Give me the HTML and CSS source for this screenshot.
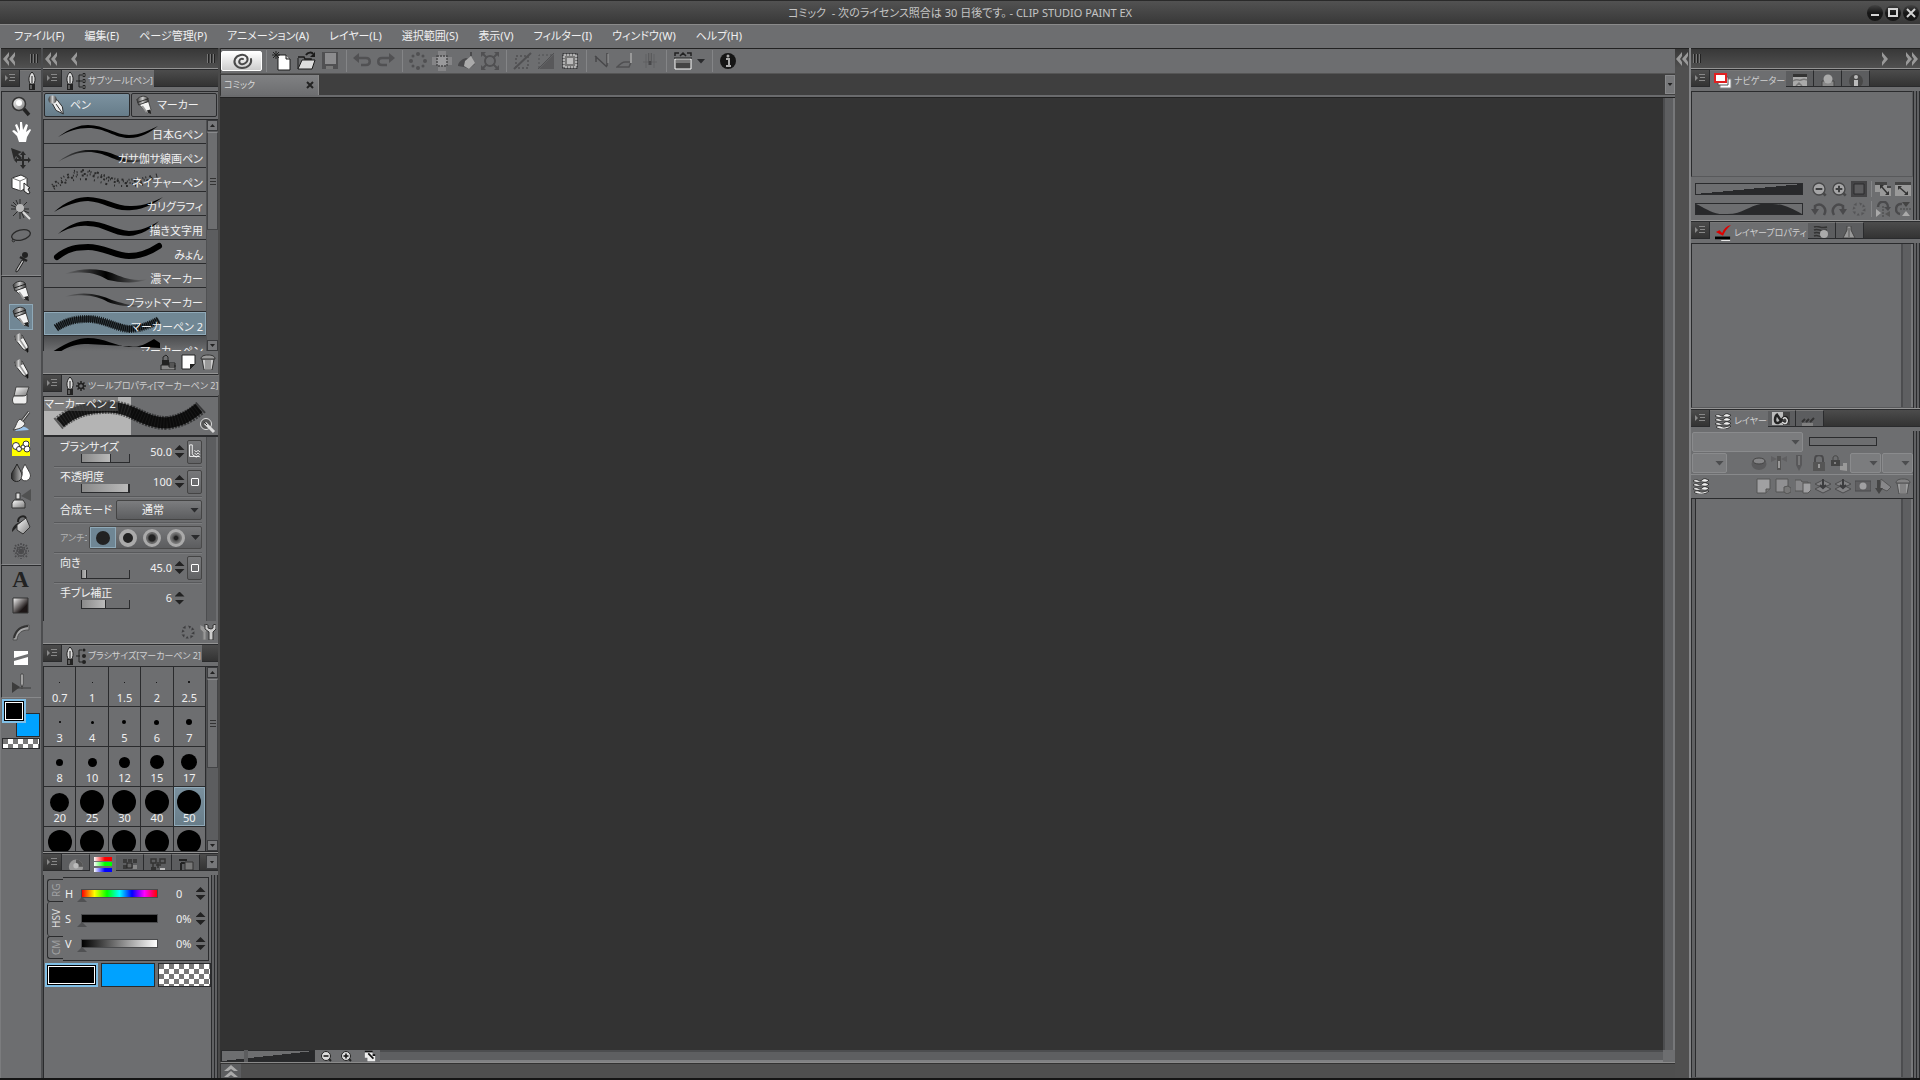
FILE: index.html
```html
<!DOCTYPE html>
<html lang="ja">
<head>
    <meta charset="UTF-8">
    <meta name="viewport" content="width=device-width, initial-scale=1.0">
    <title>CLIP STUDIO PAINT EX</title>
    <link rel="stylesheet" href="styles.css">
</head>
<body>

<!-- icon library -->
<svg class="defs" width="0" height="0" aria-hidden="true">
    <defs>
        <linearGradient id="metal" x1="0" y1="0" x2="1" y2="1"><stop offset="0" stop-color="#fff"/><stop offset="1" stop-color="#777"/></linearGradient>
        <linearGradient id="cap" x1="0" y1="0" x2="1" y2="0"><stop offset="0" stop-color="#333"/><stop offset=".5" stop-color="#ccc"/><stop offset="1" stop-color="#333"/></linearGradient>
        <linearGradient id="dark" x1="0" y1="0" x2="1" y2="1"><stop offset="0" stop-color="#fff"/><stop offset=".7" stop-color="#1c1616"/></linearGradient>
        <linearGradient id="drop" x1="0" y1="0" x2="1" y2="0"><stop offset="0" stop-color="#222"/><stop offset="1" stop-color="#bbb"/></linearGradient>
        <linearGradient id="fade" x1="0" y1="0" x2="1" y2="0"><stop offset="0" stop-color="#000" stop-opacity="0"/><stop offset=".5" stop-color="#000"/><stop offset="1" stop-color="#000" stop-opacity="0"/></linearGradient>
        <linearGradient id="fadein" x1="0" y1="0" x2="1" y2="0"><stop offset="0" stop-color="#000" stop-opacity=".3"/><stop offset=".4" stop-color="#000"/><stop offset=".55" stop-color="#000"/><stop offset="1" stop-color="#000" stop-opacity="0"/></linearGradient>
        <linearGradient id="red" x1="0" y1="0" x2="1" y2="0"><stop offset="0" stop-color="#fff"/><stop offset=".6" stop-color="#f00"/></linearGradient>
        <linearGradient id="green" x1="0" y1="0" x2="1" y2="0"><stop offset="0" stop-color="#fff"/><stop offset=".6" stop-color="#0f0"/></linearGradient>
        <linearGradient id="blue" x1="0" y1="0" x2="1" y2="0"><stop offset="0" stop-color="#fff"/><stop offset=".6" stop-color="#00f"/></linearGradient>
    </defs>

    <symbol id="i-dbl-left" viewBox="0 0 12 14"><path d="M6 0 0 7l6 7V10L4 7l2-3zM12 0 6 7l6 7V10l-2-3 2-3z" fill="#999"/></symbol>
    <symbol id="i-left" viewBox="0 0 6 14"><path d="M6 0 0 7l6 7V10L4 7l2-3z" fill="#999"/></symbol>
    <symbol id="i-right" viewBox="0 0 6 14"><path d="M0 0l6 7-6 7V10l2-3-2-3z" fill="#999"/></symbol>
    <symbol id="i-dbl-right" viewBox="0 0 12 14"><path d="M0 0l6 7-6 7V10l2-3-2-3zM6 0l6 7-6 7V10l2-3-2-3z" fill="#999"/></symbol>
    <symbol id="i-menu" viewBox="0 0 10 10"><path d="M0 2l3 3-3 3z" fill="#888"/><path d="M4 1.500h6M5 4.500h5M4 7.500h6" stroke="#888"/></symbol>
    <symbol id="i-nib" viewBox="0 0 8 18"><path d="M4 0c3 3 4 7 2 12H2C0 7 1 3 4 0z" fill="#ddd" stroke="#222"/><path d="M4 4v7" stroke="#222"/><path d="M1 12h6v6H1z" fill="#222"/><path d="M3 13v4" stroke="#999"/></symbol>
    <symbol id="i-tree" viewBox="0 0 10 16"><path d="M0 8h4M3 2h3M3 2v12h3M3 8h3" fill="none" stroke="#222"/><path d="M7 .5h2v3H7zM7 6.500h2v3H7zM7 12.500h2v3H7z" fill="#888" stroke="#222"/></symbol>
    <symbol id="i-dots" viewBox="0 0 10 16"><path d="M0 8h4M3 2h3M3 2v12h3" fill="none" stroke="#222"/><circle cx="8" cy="2" r="1.500" fill="#222"/><circle cx="8" cy="8" r="2" fill="#222"/><circle cx="8" cy="14" r="2" fill="#222"/></symbol>
    <symbol id="i-gear" viewBox="0 0 10 10"><circle cx="5" cy="5" r="2.500" fill="none" stroke="#222" stroke-width="1.500"/><path d="M5 0v3M5 7v3M0 5h3M7 5h3M1.500 1.500l2 2M6.500 6.500l2 2M8.500 1.500l-2 2M3.500 6.500l-2 2" stroke="#222" stroke-width="1.500"/></symbol>
    <symbol id="i-pen" viewBox="0 0 20 22"><path d="M4 8l6-3 6 8 1 8-8-4z" fill="#eee" stroke="#222"/><path d="M9 10l7 10" stroke="#222"/><circle cx="5" cy="5" r="4.500" fill="url(#cap)"/></symbol>
    <symbol id="i-marker" viewBox="0 0 20 22"><path d="M4 10l11-3 3 10-4 3z" fill="#f4f4f4" stroke="#444"/><path d="M8 12l5 7" stroke="#999" stroke-width="2"/><path d="M13 17l4-1 1 5-3-1z" fill="#222"/><path d="M2 5C5 1 11 0 14 3l1 4-11 4z" fill="url(#cap)" stroke="#333"/><path d="M3 8l12-4" stroke="#222"/></symbol>
    <symbol id="i-pencil" viewBox="0 0 20 22"><path d="M4 7l7-4 6 11v6l-5-3z" fill="#f2f2f2" stroke="#333"/><path d="M7 5l8 12" stroke="#999" stroke-width="1.500"/><path d="M3 4l6-3 3 5-6 4z" fill="url(#cap)"/><path d="M14 17l3-1v5z" fill="#111"/></symbol>
    <symbol id="i-zoom" viewBox="0 0 20 22"><path d="M12 13l6 7" stroke="#222" stroke-width="3.500"/><circle cx="8" cy="9" r="6.500" fill="url(#metal)" stroke="#333" stroke-width="1.500"/><circle cx="8" cy="8" r="3" fill="#fff"/></symbol>
    <symbol id="i-hand" viewBox="0 0 20 22"><path d="M6 15L1 10l2-1 4 3-3-8 2-1 3 7V1h2l1 8 3-6 2 1-2 7 4-3 1 1-4 7-1 5H8z" fill="#fff"/></symbol>
    <symbol id="i-move" viewBox="0 0 20 22"><path d="M0 1l11 4-4 2 4 4-2 2-4-4-2 4z" fill="#2a2a2a"/><path d="M12 7v12M6 13h12" stroke="#2a2a2a" stroke-width="2"/><path d="M9 8l3-4 3 4zM9 18l3 4 3-4zM6 10l-3 3 3 3zM17 10l3 3-3 3z" fill="#2a2a2a"/></symbol>
    <symbol id="i-cube" viewBox="0 0 20 22"><path d="M1 5l9-3 6 3v9l-6 4-9-3z" fill="#fff" stroke="#333"/><path d="M1 5l8 3 7-3M9 8v10" fill="none" stroke="#777"/><path d="M13 10l6 5-2 1 2 4-2 1-4-3z" fill="#eee" stroke="#222"/></symbol>
    <symbol id="i-wand" viewBox="0 0 20 22"><path d="M9 0v20M0 10h18M2 3l14 14M16 3L2 17M5 1l8 18M0 6l18 8" stroke="#2b2b2b"/><circle cx="9" cy="9" r="4" fill="#bbb"/><path d="M12 13l7 7" stroke="#ddd" stroke-width="2"/></symbol>
    <symbol id="i-lasso" viewBox="0 0 20 22"><ellipse cx="10" cy="10" rx="9.500" ry="5" fill="none" stroke="#2a2a2a" stroke-width="1.300" transform="rotate(-14 10 10)"/><path d="M2 14c-2 2 0 4 2 2" fill="none" stroke="#2a2a2a"/></symbol>
    <symbol id="i-dropper" viewBox="0 0 20 22"><path d="M11 9l2 1-6 10-2 1 0-2z" fill="#bbb" stroke="#222"/><path d="M9 6l7 4" stroke="#222" stroke-width="2.500"/><circle cx="14" cy="4" r="3" fill="#222"/></symbol>
    <symbol id="i-eraser" viewBox="0 0 20 22"><path d="M5 3h13l-3 9H3z" fill="url(#metal)" stroke="#444"/><path d="M3 12h8c2 0 4 0 5-2v7c0 3-2 3-4 3H3c-2-2-2-6 0-8z" fill="#eee" stroke="#444"/></symbol>
    <symbol id="i-brush" viewBox="0 0 20 22"><path d="M4 21c6-6 11-5 14-1z" fill="#9ac4ec"/><path d="M18 2l-7 9" stroke="#444" stroke-width="3"/><path d="M18 2l-7 9" stroke="#ddd"/><path d="M9 9l5 4c-1 5-7 6-12 7 4-4 3-9 7-11z" fill="#eee" stroke="#444"/></symbol>
    <symbol id="i-butterfly" viewBox="0 0 20 22"><path d="M1 2h18v18H1z" fill="#ff0"/><g fill="#fff" stroke="#333"><circle cx="5" cy="10" r="3.500"/><circle cx="15" cy="8" r="3"/><circle cx="16" cy="13" r="3"/><circle cx="8" cy="13" r="2.500"/><circle cx="12" cy="11" r="2"/></g></symbol>
    <symbol id="i-blend" viewBox="0 0 20 22"><path d="M6 2c3 6 5 9 5 12a5 5 0 0 1-11 0c0-3 3-6 6-12z" fill="url(#drop)" stroke="#222"/><path d="M14 2c3 6 5.500 9 5.500 12a5 5 0 0 1-9.500 2c2-3 1-7 1-8z" fill="#fff" stroke="#444"/></symbol>
    <symbol id="i-spray" viewBox="0 0 20 22"><path d="M10 8l10-7v12z" fill="#444" opacity=".7"/><path d="M5 5h4v6H5z" fill="#ddd" stroke="#333"/><path d="M3 12h9l2 3v5H1v-5z" fill="url(#metal)" stroke="#333"/></symbol>
    <symbol id="i-bucket" viewBox="0 0 20 22"><path d="M1 18c0-5 3-8 8-10l3 1-6 4z" fill="#222"/><path d="M6 11l9-7 4 9-7 7-6-4z" fill="url(#metal)" stroke="#333"/><path d="M7 8c0-6 6-7 8-4" fill="none" stroke="#222" stroke-width="2"/></symbol>
    <symbol id="i-burst" viewBox="0 0 20 22"><path d="M10 3v16M2 11h16M4 5l12 12M16 5L4 17M7 4l6 14M13 4L7 18M3 8l14 6M17 8L3 14" stroke="#4a4a4c" stroke-width="1.500" stroke-dasharray="2 1"/></symbol>
    <symbol id="i-gradient" viewBox="0 0 20 22"><path d="M2 3h15v15H2z" fill="url(#dark)" stroke="#333"/></symbol>
    <symbol id="i-figure" viewBox="0 0 20 22"><path d="M2 19C3 10 8 5 18 4v5C10 9 7 12 6 19z" fill="url(#metal)" stroke="#444" opacity=".7"/><path d="M3 17C5 9 9 6 17 5" stroke="#333" fill="none" stroke-width="2"/></symbol>
    <symbol id="i-frame" viewBox="0 0 20 22"><path d="M3 4h14v3L3 11zM3 14l14-4v8H3z" fill="#fff"/></symbol>
    <symbol id="i-ruler" viewBox="0 0 20 22"><path d="M1 9l8 5-8 6z" fill="#3c3c3c"/><path d="M6 15h14" stroke="#3c3c3c"/><path d="M10 1v10l1 5 1-5V1z" fill="#fff" stroke="#444"/></symbol>

    <symbol id="i-swirl" viewBox="0 0 24 18"><path d="M13 7c-4-1-5 4-2 5 4 1 8-3 6-7-3-4-10-2-12 2-2 5 2 9 7 9 6 0 10-4 9-9" fill="none" stroke="#4a4a4a" stroke-width="2" stroke-linecap="round"/></symbol>
    <symbol id="i-new" viewBox="0 0 20 20"><path d="M6 4h8l4 4v11H6z" fill="#fff" stroke="#1a1a1a"/><path d="M14 4v4h4" fill="#ccc" stroke="#1a1a1a"/><path d="M4 0v8M0 4h8M1 1l6 6M7 1L1 7" stroke="#222"/></symbol>
    <symbol id="i-open" viewBox="0 0 20 20"><path d="M2 6h6l1 2h6v3" fill="none" stroke="#1a1a1a" stroke-width="1.500"/><path d="M2 18V7" stroke="#1a1a1a"/><path d="M6 9h13l-3 9H2z" fill="#ddd" stroke="#1a1a1a"/><path d="M10 4c2-3 6-3 7-1" fill="none" stroke="#1a1a1a" stroke-width="2"/><path d="M19 1v5h-5z" fill="#1a1a1a"/></symbol>
    <symbol id="i-save" viewBox="0 0 20 20"><path d="M2 1h16v17H2z" fill="#505052"/><path d="M5 2h11v11H5z" fill="#8c8c8e"/><path d="M6 15h7v3H6z" fill="#777"/></symbol>
    <symbol id="i-undo" viewBox="0 0 20 20"><path d="M6 7h8c5 0 5 7 0 7H9" fill="none" stroke="#515153" stroke-width="2.500" /><path d="M7 2v10L1 7z" fill="#515153"/></symbol>
    <symbol id="i-redo" viewBox="0 0 20 20"><path d="M14 7H6c-5 0-5 7 0 7h5" fill="none" stroke="#515153" stroke-width="2.500"/><path d="M13 2v10l6-5z" fill="#515153"/></symbol>
    <symbol id="i-spots" viewBox="0 0 20 20"><g fill="#505052"><circle cx="10" cy="3" r="2"/><circle cx="15" cy="5" r="1.500"/><circle cx="17" cy="10" r="2"/><circle cx="15" cy="15" r="1.500"/><circle cx="10" cy="17" r="2"/><circle cx="5" cy="15" r="1.500"/><circle cx="3" cy="10" r="2"/><circle cx="5" cy="5" r="1.500"/></g></symbol>
    <symbol id="i-spin" viewBox="0 0 20 20"><path d="M10 2l4 1-2 3zM15 4l3 3-4 1zM18 9v4l-4-1zM17 15l-4 3v-4zM11 18l-4 0 2-3zM5 17l-3-4h4zM2 11l1-4 3 2zM3 5l4-3v4z" fill="#3e3e40"/></symbol>
    <symbol id="i-select-clear" viewBox="0 0 20 20"><path d="M6 0h8v20H6zM0 6h20v8H0z" fill="#858587"/><path d="M5 5h10v10H5z" fill="#9a9a9c" stroke="#48484a" stroke-width="1.500" stroke-dasharray="2 1"/></symbol>
    <symbol id="i-fill" viewBox="0 0 20 20"><path d="M2 15c0-4 4-7 8-8l6 2 3 4-6 5-5-2z" fill="#4a4a4c"/><path d="M9 10l6-5 4 7-6 6-5-3z" fill="#aaa"/><path d="M15 1v4" stroke="#4a4a4c" stroke-width="2"/></symbol>
    <symbol id="i-scale" viewBox="0 0 20 20"><circle cx="10" cy="10" r="5" fill="none" stroke="#505052" stroke-width="2"/><path d="M2 2l5 5M18 2l-5 5M2 18l5-5M18 18l-5-5" stroke="#505052" stroke-width="2"/><path d="M1 1h5L1 6zM19 1h-5l5 5zM1 19h5l-5-5zM19 19h-5l5-5z" fill="#505052"/></symbol>
    <symbol id="i-desel" viewBox="0 0 20 20"><path d="M4 5h12v12H4z" fill="none" stroke="#505052" stroke-width="1.500" stroke-dasharray="2 2"/><path d="M2 18L19 2" stroke="#505052" stroke-width="2"/></symbol>
    <symbol id="i-invert" viewBox="0 0 20 20"><path d="M18 3v15H3z" fill="#58585a"/><path d="M3 17V4h13" fill="none" stroke="#505052" stroke-dasharray="2 2"/><path d="M2 18L18 2" stroke="#505052"/></symbol>
    <symbol id="i-marquee" viewBox="0 0 20 20"><path d="M4 4h12v12H4z" fill="#777" stroke="#b0b0b0" stroke-width="2" stroke-dasharray="2 1"/><path d="M2.500 2.500h15v15h-15z" fill="none" stroke="#3c3c3e" stroke-dasharray="2 1"/><path d="M7 7h6v6H7z" fill="#bbb"/></symbol>
    <symbol id="i-snap1" viewBox="0 0 20 20"><path d="M3 5l12 11M4 5v6M15 15V2" fill="none" stroke="#48484a" stroke-width="1.500"/><path d="M16 3v9" stroke="#999"/></symbol>
    <symbol id="i-snap2" viewBox="0 0 20 20"><path d="M1 16h12l2-5H9c-3 0-5 2-8 5z" fill="none" stroke="#505052" stroke-width="1.500"/><path d="M15 2v10" stroke="#999" stroke-width="2"/></symbol>
    <symbol id="i-snap3" viewBox="0 0 20 20"><path d="M6 3v14M14 3v14M3 11h14" stroke="#606062"/><path d="M10 2v12" stroke="#48484a" stroke-width="3"/><path d="M10 2v8" stroke="#888"/></symbol>
    <symbol id="i-bar" viewBox="0 0 20 20"><path d="M2 5V2h4M14 2h4v3M7 5l3-3 3 3" fill="none" stroke="#222" stroke-width="1.500"/><path d="M2 8h16v10H2z" fill="#444" stroke="#fff"/><path d="M1 7h18" stroke="#222"/><path d="M3 9h14v3H3z" fill="#777"/></symbol>
    <symbol id="i-info" viewBox="0 0 20 20"><circle cx="10" cy="10" r="8" fill="#151515"/><path d="M8 8h3v7M8 15h5" stroke="#aaa" stroke-width="2" fill="none"/><circle cx="10" cy="5" r="1.500" fill="#aaa"/></symbol>

    <symbol id="i-pages" viewBox="0 0 18 16"><path d="M6 6h11v9H6z" fill="#fff" stroke="#888"/><path d="M4 4h10v8H4z" fill="#fff" stroke="#555"/><path d="M1 1h11v8H1z" fill="#fff" stroke="#e02020" stroke-width="2"/></symbol>
    <symbol id="i-subview" viewBox="0 0 16 12"><path d="M1 0h14v3H1z" fill="#333"/><path d="M1 3h14v9H1z" fill="#aaa"/><path d="M1 7c4-3 6 0 8-1s4-1 6 0M4 12l3-3 3 3" stroke="#777" fill="none" stroke-width="1.500"/></symbol>
    <symbol id="i-head" viewBox="0 0 16 12"><path d="M2 12V7h12v5" fill="#888" stroke="#444"/><circle cx="8" cy="5" r="4.500" fill="#aaa"/></symbol>
    <symbol id="i-info-dim" viewBox="0 0 16 12"><circle cx="8" cy="7" r="7" fill="#484848"/><circle cx="8" cy="3" r="2" fill="#bbb"/><path d="M6 6h4v6H6z" fill="#bbb"/></symbol>
    <symbol id="i-check" viewBox="0 0 18 18"><path d="M1 8l4-2 3 3c2-5 5-8 10-9-5 4-7 8-9 12z" fill="#d00"/><path d="M0 13h17v3H0z" fill="#000"/><path d="M7 17.500h10" stroke="#fff"/></symbol>
    <symbol id="i-layers" viewBox="0 0 18 16"><path d="M1 3c4-4 6 2 9-1s5 0 7 0c-3 4-6 1-9 2S3 4 1 3zM1 7c4-4 6 2 9-1s5 0 7 0c-3 4-6 1-9 2S3 8 1 7zM1 11c4-4 6 2 9-1s5 0 7 0c-3 4-6 1-9 2s-5 0-7-1zM2 14c4-3 6 1 9 0s4-1 6-1c-3 4-12 4-15 1z" fill="#eee" stroke="#222" stroke-width=".8"/></symbol>
    <symbol id="i-search-layer" viewBox="0 0 16 12"><path d="M1 1c5-2 6 2 13 0M1 4c5-2 6 2 13 0M1 7c5-2 6 2 13 0M1 10c4-2 6 2 8 0" fill="none" stroke="#333" stroke-width="1.500"/><circle cx="11" cy="8" r="4" fill="#aaa"/></symbol>
    <symbol id="i-flask" viewBox="0 0 16 12"><path d="M6 0h4v4l4 8H2l4-8z" fill="#999" stroke="#444"/><path d="M8 2v9" stroke="#555"/></symbol>
    <symbol id="i-knot" viewBox="0 0 18 13"><path d="M0 0h11v13H0z" fill="#bbb"/><path d="M11 0h7v13h-7z" fill="#444"/><path d="M6 2C2 4 2 12 6 11s4-6 7-6 4 6 0 6-5-5-8-8" fill="none" stroke="#222" stroke-width="2.500"/><path d="M11 7c2-3 5 0 4 3s-4 1-5 0" fill="none" stroke="#ddd" stroke-width="1.500"/></symbol>
    <symbol id="i-clap" viewBox="0 0 16 12"><path d="M1 9h11v3H1z" fill="#808080"/><path d="M1 8l3-3M5 8l3-3M9 8l4-4" stroke="#333" stroke-width="2"/></symbol>
    <symbol id="i-ball" viewBox="0 0 18 12"><circle cx="9" cy="9" r="8" fill="#999"/><path d="M9 1a8 8 0 0 1 8 8H9z" fill="#555"/><circle cx="9" cy="8" r="3" fill="#bbb"/></symbol>
    <symbol id="i-rgb" viewBox="0 0 18 16"><path d="M0 0h18v4H0z" fill="url(#red)"/><path d="M0 5h18v4H0z" fill="url(#green)"/><path d="M0 11h18v4H0z" fill="url(#blue)"/></symbol>
    <symbol id="i-palette" viewBox="0 0 16 12"><path d="M1 1h4v4H1zM6 1h4v3H6zM11 1h4v4h-4zM1 7h4v4H1z" fill="#3a3a3a"/><path d="M11 7h4v4h-4z" fill="#888"/><path d="M5 5h5v5H5z" fill="#666" stroke="#222"/></symbol>
    <symbol id="i-mix" viewBox="0 0 16 12"><path d="M1 1h5v4H1zM10 1h5v4h-5zM3 5v4M6 7h5M8 4v6" fill="none" stroke="#333" stroke-width="1.500"/><path d="M1 9h5v3H1z" fill="#333"/><path d="M10 10h5v2h-5z" fill="#bbb"/></symbol>
    <symbol id="i-history" viewBox="0 0 16 12"><path d="M1 2h8M3 5h5M3 5v7" stroke="#222" stroke-width="2"/><path d="M7 4h8v8H7z" fill="#777" stroke="#333"/></symbol>

    <symbol id="i-minus" viewBox="0 0 12 12"><path d="M8 8l3 3" stroke="#222" stroke-width="2"/><circle cx="6" cy="6" r="4.500" fill="#ddd" stroke="#222"/><path d="M3.500 6h5" stroke="#111" stroke-width="1.500"/></symbol>
    <symbol id="i-plus" viewBox="0 0 12 12"><path d="M8 8l3 3" stroke="#222" stroke-width="2"/><circle cx="6" cy="6" r="4.500" fill="#ddd" stroke="#222"/><path d="M3.500 6h5M6 3.500v5" stroke="#111" stroke-width="1.500"/></symbol>
    <symbol id="i-fit" viewBox="0 0 14 12"><path d="M1 0h9v2H1zM4 4h9v2H4z" fill="#111"/><path d="M1 2h9v6H1zM4 6h9v6H4z" fill="#eee"/><path d="M5 3l6 6" stroke="#111" stroke-width="2"/></symbol>
    <symbol id="i-box" viewBox="0 0 16 16"><path d="M0 0h16v16H0z" fill="#434345"/><path d="M3 3h10v10H3z" fill="#5c5c5e" stroke="#2c2c2e"/></symbol>
    <symbol id="i-window" viewBox="0 0 16 14"><path d="M0 0h16v3H0z" fill="#444"/><path d="M0 3h16v11H0z" fill="#999"/><path d="M4 5l8 7" stroke="#333" stroke-width="1.500"/><path d="M3 4h4l-4 4zM13 13H9l4-4z" fill="#333"/></symbol>
    <symbol id="i-windows" viewBox="0 0 16 14"><path d="M0 0h12v3H0zM5 4h11v2H5z" fill="#444"/><path d="M0 3h12v7H0zM5 6h11v8H5z" fill="#999"/><path d="M6 4l7 8" stroke="#333" stroke-width="1.500"/><path d="M5 3h4l-4 4zM14 13h-4l4-4z" fill="#333"/></symbol>
    <symbol id="i-rot-l" viewBox="0 0 16 14"><path d="M13 13c4-7-3-13-9-9v6" fill="none" stroke="#4a4a4c" stroke-width="2.500"/><path d="M0 7h8l-4 6z" fill="#4a4a4c"/></symbol>
    <symbol id="i-rot-r" viewBox="0 0 16 14"><path d="M3 13C-1 6 6 0 12 4v6" fill="none" stroke="#4a4a4c" stroke-width="2.500"/><path d="M8 7h8l-4 6z" fill="#4a4a4c"/></symbol>
    <symbol id="i-flip" viewBox="0 0 16 16"><path d="M3 6c0-7 10-7 10 0" fill="none" stroke="#4a4a4c" stroke-width="2.500"/><path d="M9 6h7l-3 4z" fill="#4a4a4c"/><path d="M1 8l5 4-5 4z" fill="#aaa"/><path d="M15 10v6l-5-3z" fill="#555"/><path d="M8 5v11" stroke="#444" stroke-dasharray="2 1"/></symbol>
    <symbol id="i-vflip" viewBox="0 0 16 16"><path d="M7 3C0 2-1 12 5 13" fill="none" stroke="#4a4a4c" stroke-width="2.500"/><path d="M7 1h8l-4 5z" fill="#444"/><path d="M7 15h8l-4-5z" fill="#aaa"/><path d="M5 8h11" stroke="#444" stroke-dasharray="2 1"/></symbol>

    <symbol id="i-eye" viewBox="0 0 16 16"><ellipse cx="8" cy="9" rx="7.500" ry="6" fill="#5a5a5c"/><ellipse cx="8" cy="6" rx="6" ry="3" fill="#858587" stroke="#444"/></symbol>
    <symbol id="i-light" viewBox="0 0 16 16"><path d="M0 1l6 3-6 3zM16 1l-6 3 6 3z" fill="#606062"/><path d="M6 1h4v14H6z" fill="#555"/><path d="M8 6v7" stroke="#999" stroke-width="2"/></symbol>
    <symbol id="i-draft" viewBox="0 0 16 16"><path d="M5 0h6v10l-3 6-3-6z" fill="#58585a"/><path d="M8 1v9" stroke="#999"/></symbol>
    <symbol id="i-lock" viewBox="0 0 16 16"><path d="M4 8V4c0-5 8-5 8 0v4" fill="none" stroke="#4a4a4c" stroke-width="2"/><path d="M2 7h12v9H2z" fill="#555"/><path d="M8 9v4" stroke="#999" stroke-width="2"/></symbol>
    <symbol id="i-lock-px" viewBox="0 0 16 16"><path d="M2 5V3c0-3 5-3 5 0v2" fill="none" stroke="#444"/><path d="M0 5h9v6H0z" fill="#444"/><path d="M9 15v-4h3V8h4v8z" fill="#999"/><path d="M4 7v2" stroke="#bbb"/></symbol>
    <symbol id="i-page" viewBox="0 0 16 16"><path d="M2 1h13v10l-4 4H2z" fill="#a0a0a2" stroke="#555"/><path d="M15 11h-4v4" fill="#777" stroke="#555"/></symbol>
    <symbol id="i-page-sub" viewBox="0 0 16 16"><path d="M1 1h12v13H1z" fill="#909092" stroke="#555"/><path d="M9 9l4-1 3 2v4l-4 2-3-2z" fill="#777" stroke="#555"/></symbol>
    <symbol id="i-folder" viewBox="0 0 16 16"><path d="M0 2h6l1 2h6v9H0z" fill="#88888a" stroke="#555"/><path d="M8 5h8v7l-3 3H8z" fill="#a0a0a2" stroke="#555"/></symbol>
    <symbol id="i-merge" viewBox="0 0 16 16"><path d="M0 6l8-4 8 4-8 4zM0 11l8-4 8 4-8 4z" fill="#828284" stroke="#4c4c4e"/><path d="M8 1v8M5 7l3 3 3-3" stroke="#3c3c3e" stroke-width="2" fill="none"/></symbol>
    <symbol id="i-mask" viewBox="0 0 16 16"><path d="M0 3h16v10H0z" fill="#606062" stroke="#4a4a4c"/><circle cx="8" cy="8" r="3.500" fill="#a0a0a2"/></symbol>
    <symbol id="i-apply" viewBox="0 0 16 16"><path d="M6 1l10 8-4 4-7-3z" fill="#88888a" stroke="#555"/><path d="M2 2h3v8h3l-4 6-4-6h2z" fill="#444"/></symbol>
    <symbol id="i-trash" viewBox="0 0 16 16"><path d="M2 5h12l-2 11H4z" fill="#ccc" stroke="#333"/><path d="M6 6v9M8 6v9M10 6v9" stroke="#666"/><path d="M1 5c0-3 3-4 7-4s7 1 7 4z" fill="#999" stroke="#333"/></symbol>
    <symbol id="i-material" viewBox="0 0 16 16"><path d="M2 6h7v5H2z" fill="#222"/><path d="M3 6V3l3-2 2 2v3" fill="none" stroke="#222"/><path d="M1 11h14v5H1zM9 9h6v4H9z" fill="#888" stroke="#222"/></symbol>
    <symbol id="i-note" viewBox="0 0 16 16"><path d="M2 1h13v9l-5 5H2z" fill="#fff" stroke="#222"/><path d="M15 10h-5v5z" fill="#222"/></symbol>
    <symbol id="i-wrench" viewBox="0 0 16 16"><circle cx="6" cy="6" r="5.500" fill="#555" stroke="#ddd"/><path d="M5 5l9 9" stroke="#ddd" stroke-width="3"/><path d="M4 4l3 3" stroke="#333"/></symbol>
    <symbol id="i-wrench2" viewBox="0 0 16 16"><path d="M0 1v4l3 3v8h3V8l2-3" fill="#999" stroke="#777"/><path d="M5 0v5l4 3v8h4V8l3-3V0l-3 1v3l-2 1-3-1V1z" fill="#ccc" stroke="#333"/></symbol>
    <symbol id="i-pressure" viewBox="0 0 14 18"><path d="M1.500 1v13h4l7 0M1.500 1h3v10l2 3M7 7l2 2 2-2 2 2M7 10l2 2 2-2 2 2M7 13l2 2 2-2 2 2" stroke="#fff" fill="none"/></symbol>
</svg>

<header class="titlebar">
    <h1>コミック &nbsp;- 次のライセンス照合は 30 日後です。 - CLIP STUDIO PAINT EX</h1>
    <div class="window-controls">
        <button aria-label="最小化"><svg viewBox="0 0 16 16"><path d="M4 10h8" /></svg></button>
        <button aria-label="最大化"><svg viewBox="0 0 16 16"><path d="M4 4h8v7H4z" /></svg></button>
        <button aria-label="閉じる"><svg viewBox="0 0 16 16"><path d="M4 4l8 8M12 4l-8 8" /></svg></button>
    </div>
</header>

<nav class="menubar">
    <a href="#">ファイル(F)</a>
    <a href="#">編集(E)</a>
    <a href="#">ページ管理(P)</a>
    <a href="#">アニメーション(A)</a>
    <a href="#">レイヤー(L)</a>
    <a href="#">選択範囲(S)</a>
    <a href="#">表示(V)</a>
    <a href="#">フィルター(I)</a>
    <a href="#">ウィンドウ(W)</a>
    <a href="#">ヘルプ(H)</a>
</nav>

<div class="workspace">

    <!-- tools -->
    <aside class="toolbox">
        <div class="dock-head"><svg class="dbl"><use href="#i-dbl-left"/></svg><span class="grip end"></span></div>
        <div class="tabs"><button class="tab-menu" aria-label="メニュー"><svg><use href="#i-menu"/></svg></button><div class="tab active"><svg class="nib"><use href="#i-nib"/></svg></div></div>
        <div class="tool-group">
            <button class="tool" aria-label="虫めがね"><svg><use href="#i-zoom"/></svg></button>
            <button class="tool" aria-label="移動"><svg><use href="#i-hand"/></svg></button>
            <button class="tool" aria-label="レイヤー移動"><svg><use href="#i-move"/></svg></button>
            <button class="tool" aria-label="操作"><svg><use href="#i-cube"/></svg></button>
            <button class="tool" aria-label="自動選択"><svg><use href="#i-wand"/></svg></button>
            <button class="tool" aria-label="選択範囲"><svg><use href="#i-lasso"/></svg></button>
            <button class="tool" aria-label="スポイト"><svg><use href="#i-dropper"/></svg></button>
        </div>
        <div class="tool-group">
            <button class="tool" aria-label="マーカー"><svg><use href="#i-marker"/></svg></button>
            <button class="tool selected" aria-label="ペン"><svg><use href="#i-marker"/></svg></button>
            <button class="tool" aria-label="鉛筆"><svg><use href="#i-pencil"/></svg></button>
            <button class="tool" aria-label="色鉛筆"><svg><use href="#i-pencil"/></svg></button>
            <button class="tool" aria-label="消しゴム"><svg><use href="#i-eraser"/></svg></button>
            <button class="tool" aria-label="筆"><svg><use href="#i-brush"/></svg></button>
            <button class="tool" aria-label="デコレーション"><svg><use href="#i-butterfly"/></svg></button>
            <button class="tool" aria-label="色混ぜ"><svg><use href="#i-blend"/></svg></button>
            <button class="tool" aria-label="エアブラシ"><svg><use href="#i-spray"/></svg></button>
            <button class="tool" aria-label="塗りつぶし"><svg><use href="#i-bucket"/></svg></button>
            <button class="tool" aria-label="集中線"><svg><use href="#i-burst"/></svg></button>
        </div>
        <div class="tool-group">
            <button class="tool glyph-a" aria-label="テキスト">A</button>
            <button class="tool" aria-label="グラデーション"><svg><use href="#i-gradient"/></svg></button>
            <button class="tool" aria-label="図形"><svg><use href="#i-figure"/></svg></button>
            <button class="tool" aria-label="コマ枠"><svg><use href="#i-frame"/></svg></button>
            <button class="tool" aria-label="定規"><svg><use href="#i-ruler"/></svg></button>
        </div>
        <div class="tool-colors">
            <button class="swatch sub" aria-label="サブカラー"></button>
            <button class="swatch main" aria-label="メインカラー"></button>
        </div>
        <button class="swatch checker tool-clear" aria-label="透明色"></button>
    </aside>

    <!-- pen panels -->
    <aside class="palettes">
        <div class="dock-head"><svg class="dbl"><use href="#i-dbl-left"/></svg><svg class="single"><use href="#i-left"/></svg><span class="grip end"></span></div>

        <section class="panel">
            <div class="tabs">
                <button class="tab-menu" aria-label="メニュー"><svg><use href="#i-menu"/></svg></button>
                <div class="tab active"><svg class="nib"><use href="#i-nib"/></svg><svg class="tree"><use href="#i-tree"/></svg><h2>サブツール[ペン]</h2></div>
            </div>
            <div class="groups">
                <button class="group selected"><svg><use href="#i-pen"/></svg>ペン</button>
                <button class="group"><svg><use href="#i-marker"/></svg>マーカー</button>
            </div>
            <div class="scroller subtools">
                <div class="subtool-list">
                    <button class="subtool"><svg viewBox="0 0 162 23"><path d="M14 17C26 8 36 5 44 5c16 0 28 10 41 10 11 0 21-5 29-9-8 6-16 12-29 12C70 18 62 8 44 8 34 8 24 11 14 17z"/></svg><span>日本Gペン</span></button>
                    <button class="subtool"><svg viewBox="0 0 162 23"><path d="M14 18C26 8 38 6 44 6c18-1 26 5 41 10 11 1 21-2 29-8-8 7-16 11-29 10-15 0-23-10-41-10-10 0-20 4-30 10z" fill="url(#fadein)"/></svg><span>ガサ伽サ線画ペン</span></button>
                    <button class="subtool"><svg viewBox="0 0 162 23" class="scatter">
                        <path d="M8 17C24 3 40 1 54 6s30 10 60 0" stroke-dasharray="1 3 2 5 1 2"/>
                        <path d="M9 19C26 5 40 4 54 8s30 10 60 0" stroke-dasharray="2 4 1 3 1 6"/>
                        <path d="M12 18C28 7 42 5 56 10s30 8 56 0" stroke-dasharray="1 5 2 3"/>
                        <path d="M10 21C26 10 42 9 56 14s30 6 56 0" stroke-dasharray="1 6 1 4 2 7"/>
                        <path d="M30 3C46 0 60 7 72 12s24 6 36-2" stroke-dasharray="1 7 2 5"/>
                    </svg><span>ネイチャーペン</span></button>
                    <button class="subtool"><svg viewBox="0 0 162 23"><path d="M10 20C22 9 34 5 44 5c16 0 30 10 44 9 12 0 24-5 31-9-8 6-18 12-31 13C70 20 60 10 44 9 34 9 22 13 10 20z"/></svg><span>カリグラフィ</span></button>
                    <button class="subtool"><svg viewBox="0 0 162 23"><path d="M14 18C24 9 34 5 44 5c16 0 28 9 41 10 11 0 21-4 30-10-8 8-18 14-30 15C68 20 60 10 44 10 34 9 24 12 14 18z"/></svg><span>描き文字用</span></button>
                    <button class="subtool"><svg viewBox="0 0 162 23"><path d="M13 17C24 8 34 7 44 7c16 0 28 9 41 9 11 0 21-4 30-10" fill="none" stroke="#000" stroke-width="6" stroke-linecap="round"/></svg><span>みょん</span></button>
                    <button class="subtool"><svg viewBox="0 0 162 23"><path d="M20 10c20-7 36-5 48-1 10 4 20 9 36 6-14 6-30 3-40 1C54 10 44 6 20 10z" fill="url(#fade)"/></svg><span>濃マーカー</span></button>
                    <button class="subtool"><svg viewBox="0 0 162 23"><path d="M20 9c20-7 36-2 48 3 10 3 20 7 36 5-14 3-30 1-40-3C54 9 44 5 20 9z" fill="url(#fade)"/></svg><span>フラットマーカー</span></button>
                    <button class="subtool selected"><svg viewBox="0 0 162 23"><path d="M12 16C24 8 34 7 44 7c16 0 28 9 41 10 11 0 21-4 30-9" fill="none" stroke="#000" stroke-width="6" opacity=".6"/><path d="M12 16C24 8 34 7 44 7c16 0 28 9 41 10 11 0 21-4 30-9" fill="none" stroke="#000" stroke-width="8" stroke-dasharray="1 1" opacity=".8"/></svg><span>マーカーペン 2</span></button>
                    <button class="subtool last"><svg viewBox="0 0 162 23"><path d="M8 16C24 6 34 2 44 2c16 0 28 8 41 9 11 0 17-3 25-8l6 4v5L44 8C34 8 24 10 16 16z"/></svg><span>マーカーペン</span></button>
                </div>
                <div class="scrollbar"><button class="arrow up" aria-label="上へ"></button><span class="thumb"></span><button class="arrow down" aria-label="下へ"></button></div>
            </div>
            <div class="panel-foot">
                <button aria-label="素材"><svg><use href="#i-material"/></svg></button>
                <button aria-label="複製"><svg><use href="#i-note"/></svg></button>
                <button aria-label="削除"><svg><use href="#i-trash"/></svg></button>
            </div>
        </section>

        <section class="panel">
            <div class="tabs">
                <button class="tab-menu" aria-label="メニュー"><svg><use href="#i-menu"/></svg></button>
                <div class="tab active"><svg class="nib"><use href="#i-nib"/></svg><svg class="gear"><use href="#i-gear"/></svg><h2>ツールプロパティ[マーカーペン 2]</h2></div>
            </div>
            <div class="preview">
                <svg class="preview-stroke" viewBox="0 0 175 38"><path d="M16 26C32 12 48 10 64 10c26 0 34 16 60 16 14-2 22-7 32-15" fill="none" stroke="#000" stroke-width="11" opacity=".8"/><path d="M14 27C32 12 48 10 64 10c26 0 34 16 60 16 14-2 24-7 34-16" fill="none" stroke="#000" stroke-width="14" stroke-dasharray="2 1" opacity=".5"/></svg>
                <span>マーカーペン 2</span>
                <button aria-label="設定"><svg><use href="#i-wrench"/></svg></button>
            </div>
            <div class="scroller props-wrap">
                <div class="props">
                    <div class="prop">
                        <div class="prop-main"><label for="size">ブラシサイズ</label><input type="range" id="size" class="level" value="62" style="--fill: 62%"></div>
                        <input type="text" class="num" aria-label="ブラシサイズの値" value="50.0"><span class="spin"><button aria-label="増"></button><button aria-label="減"></button></span>
                        <button class="dyn" aria-label="筆圧"><svg><use href="#i-pressure"/></svg></button>
                    </div>
                    <div class="prop">
                        <div class="prop-main"><label for="opacity">不透明度</label><input type="range" id="opacity" class="level" value="100" style="--fill: 100%"></div>
                        <input type="text" class="num" aria-label="不透明度の値" value="100"><span class="spin"><button aria-label="増"></button><button aria-label="減"></button></span>
                        <button class="dyn" aria-label="影響元"><i></i></button>
                    </div>
                    <div class="prop blend">
                        <label for="mode">合成モード</label>
                        <span class="select"><select id="mode"><option>通常</option></select></span>
                    </div>
                    <div class="prop anti">
                        <span class="dim">アンチエ</span>
                        <div class="aa">
                            <button class="selected" aria-label="無し"><i class="d0"></i></button>
                            <button aria-label="弱"><i class="d1"></i></button>
                            <button aria-label="中"><i class="d2"></i></button>
                            <button aria-label="強"><i class="d3"></i></button>
                            <span class="caret"></span>
                        </div>
                    </div>
                    <div class="prop">
                        <div class="prop-main"><label for="angle">向き</label><input type="range" id="angle" class="level" value="10" style="--fill: 11%"></div>
                        <input type="text" class="num" aria-label="向きの値" value="45.0"><span class="spin"><button aria-label="増"></button><button aria-label="減"></button></span>
                        <button class="dyn" aria-label="影響元"><i></i></button>
                    </div>
                    <div class="prop">
                        <div class="prop-main"><label for="stab">手ブレ補正</label><input type="range" id="stab" class="level" value="50" style="--fill: 50%"></div>
                        <input type="text" class="num" aria-label="手ブレ補正の値" value="6"><span class="spin"><button aria-label="増"></button><button aria-label="減"></button></span>
                        <span class="dyn-gap"></span>
                    </div>
                </div>
                <div class="scrollbar empty"></div>
            </div>
            <div class="panel-foot">
                <button aria-label="初期設定に戻す"><svg><use href="#i-spin"/></svg></button>
                <button aria-label="サブツール詳細"><svg><use href="#i-wrench2"/></svg></button>
            </div>
        </section>

        <section class="panel">
            <div class="tabs">
                <button class="tab-menu" aria-label="メニュー"><svg><use href="#i-menu"/></svg></button>
                <div class="tab active"><svg class="nib"><use href="#i-nib"/></svg><svg class="tree"><use href="#i-dots"/></svg><h2>ブラシサイズ[マーカーペン 2]</h2></div>
            </div>
            <div class="scroller sizes">
                <div class="size-grid" id="sizeGrid"></div>
                <div class="scrollbar"><button class="arrow up" aria-label="上へ"></button><span class="thumb"></span><button class="arrow down" aria-label="下へ"></button></div>
            </div>
        </section>

        <section class="panel color-panel">
            <div class="tabs">
                <button class="tab-menu" aria-label="メニュー"><svg><use href="#i-menu"/></svg></button>
                <button class="tab" aria-label="カラーサークル"><svg><use href="#i-ball"/></svg></button>
                <div class="tab active"><svg class="rgb"><use href="#i-rgb"/></svg></div>
                <button class="tab" aria-label="カラーセット"><svg><use href="#i-palette"/></svg></button>
                <button class="tab" aria-label="中間色"><svg><use href="#i-mix"/></svg></button>
                <button class="tab" aria-label="ヒストリー"><svg><use href="#i-history"/></svg></button>
                <button class="arrow down tab-more" aria-label="その他"></button>
            </div>
            <div class="color-body">
                <div class="color-inner">
                    <div class="color-box">
                        <div class="modes">
                            <button>RG</button>
                            <button class="on">HSV</button>
                            <button>CM</button>
                        </div>
                        <div class="channels">
                            <div class="channel"><label for="hue">H</label><input type="range" id="hue" class="hue" value="0"><input type="text" class="num" aria-label="色相" value="0"><span class="spin"><button aria-label="増"></button><button aria-label="減"></button></span></div>
                            <div class="channel"><label for="sat">S</label><input type="range" id="sat" class="sat" value="0"><input type="text" class="num" aria-label="彩度" value="0%"><span class="spin"><button aria-label="増"></button><button aria-label="減"></button></span></div>
                            <div class="channel"><label for="val">V</label><input type="range" id="val" class="val" value="0"><input type="text" class="num" aria-label="明度" value="0%"><span class="spin"><button aria-label="増"></button><button aria-label="減"></button></span></div>
                        </div>
                    </div>
                    <div class="swatches">
                        <button class="swatch main" aria-label="メインカラー"></button>
                        <button class="swatch sub" aria-label="サブカラー"></button>
                        <button class="swatch checker" aria-label="透明色"></button>
                    </div>
                </div>
                <span class="rails"></span>
            </div>
        </section>
    </aside>

    <!-- canvas -->
    <main class="stage">
        <div class="commandbar">
            <button class="logo" aria-label="CLIP STUDIO"><svg><use href="#i-swirl"/></svg></button>
            <span class="sep"></span>
            <button aria-label="新規"><svg><use href="#i-new"/></svg></button>
            <button aria-label="開く"><svg><use href="#i-open"/></svg></button>
            <button aria-label="保存"><svg><use href="#i-save"/></svg></button>
            <span class="sep"></span>
            <button aria-label="取り消し"><svg><use href="#i-undo"/></svg></button>
            <button aria-label="やり直し"><svg><use href="#i-redo"/></svg></button>
            <span class="sep"></span>
            <button aria-label="消去"><svg><use href="#i-spots"/></svg></button>
            <button aria-label="選択範囲外を消去"><svg><use href="#i-select-clear"/></svg></button>
            <button aria-label="塗りつぶし"><svg><use href="#i-fill"/></svg></button>
            <button aria-label="拡大・縮小"><svg><use href="#i-scale"/></svg></button>
            <span class="sep"></span>
            <button aria-label="選択を解除"><svg><use href="#i-desel"/></svg></button>
            <button aria-label="選択範囲を反転"><svg><use href="#i-invert"/></svg></button>
            <button aria-label="境界線を表示"><svg><use href="#i-marquee"/></svg></button>
            <span class="sep"></span>
            <button aria-label="定規にスナップ"><svg><use href="#i-snap1"/></svg></button>
            <button aria-label="特殊定規にスナップ"><svg><use href="#i-snap2"/></svg></button>
            <button aria-label="グリッドにスナップ"><svg><use href="#i-snap3"/></svg></button>
            <span class="sep"></span>
            <button class="wide" aria-label="クイックアクセス"><svg><use href="#i-bar"/></svg><span class="caret"></span></button>
            <span class="sep"></span>
            <button aria-label="情報"><svg><use href="#i-info"/></svg></button>
        </div>
        <div class="doc-tabs">
            <div class="doc-tab">コミック<button aria-label="閉じる"><svg viewBox="0 0 8 8"><path d="M1 1l6 6M7 1L1 7"/></svg></button></div>
            <button class="arrow down doc-more" aria-label="一覧"></button>
        </div>
        <div class="canvas-row">
            <div class="canvas"></div>
            <div class="vscroll"></div>
        </div>
        <div class="zoom-row">
            <input type="range" class="zoom-range" aria-label="表示倍率" value="25">
            <button aria-label="縮小"><svg><use href="#i-minus"/></svg></button>
            <button aria-label="拡大"><svg><use href="#i-plus"/></svg></button>
            <button class="fit" aria-label="フィッティング"><svg><use href="#i-fit"/></svg></button>
            <div class="hscroll"></div>
            <span class="corner"></span>
        </div>
        <div class="timeline-bar"><button aria-label="開く"><svg viewBox="0 0 14 12"><path d="M0 6l7-6 7 6h-4L7 4 4 6zM0 12l7-6 7 6h-4l-3-2-3 2z" fill="#aaa"/></svg></button></div>
    </main>

    <div class="gutter"><div class="dock-head"><svg class="dbl"><use href="#i-dbl-left"/></svg></div></div>

    <!-- navigator, layers -->
    <aside class="right">
        <div class="dock-head"><span class="grip"></span><svg class="single end"><use href="#i-right"/></svg><svg class="dbl last"><use href="#i-dbl-right"/></svg></div>

        <section class="panel">
            <div class="tabs">
                <button class="tab-menu" aria-label="メニュー"><svg><use href="#i-menu"/></svg></button>
                <div class="tab active"><svg class="big"><use href="#i-pages"/></svg><h2>ナビゲーター</h2></div>
                <button class="tab" aria-label="サブビュー"><svg><use href="#i-subview"/></svg></button>
                <button class="tab" aria-label="素材"><svg><use href="#i-head"/></svg></button>
                <button class="tab" aria-label="情報"><svg><use href="#i-info-dim"/></svg></button>
            </div>
            <div class="railed">
                <div class="nav-body">
                    <div class="nav-view"></div>
                    <div class="nav-row">
                        <input type="range" class="wedge" aria-label="拡大率">
                        <button aria-label="縮小" class="faded"><svg><use href="#i-minus"/></svg></button>
                        <button aria-label="拡大" class="faded"><svg><use href="#i-plus"/></svg></button>
                        <button aria-label="100%"><svg><use href="#i-box"/></svg></button>
                        <span class="sep"></span>
                        <button aria-label="全体表示"><svg><use href="#i-windows"/></svg></button>
                        <button aria-label="フィット"><svg><use href="#i-window"/></svg></button>
                    </div>
                    <div class="nav-row">
                        <span class="wave"><svg viewBox="0 0 108 12" preserveAspectRatio="none"><path d="M0 0v12h108C98 6 90 0 78 0H66C54 2 48 12 32 12H24C14 10 8 4 0 0z"/></svg><input type="range" aria-label="回転"></span>
                        <button aria-label="左回転"><svg><use href="#i-rot-l"/></svg></button>
                        <button aria-label="右回転"><svg><use href="#i-rot-r"/></svg></button>
                        <button aria-label="リセット" class="faded"><svg><use href="#i-spin"/></svg></button>
                        <span class="sep"></span>
                        <button aria-label="左右反転"><svg><use href="#i-flip"/></svg></button>
                        <button aria-label="上下反転"><svg><use href="#i-vflip"/></svg></button>
                    </div>
                </div>
                <span class="rails"></span>
            </div>
        </section>

        <section class="panel">
            <div class="tabs">
                <button class="tab-menu" aria-label="メニュー"><svg><use href="#i-menu"/></svg></button>
                <div class="tab active"><svg class="big"><use href="#i-check"/></svg><h2>レイヤープロパティ</h2></div>
                <button class="tab" aria-label="レイヤー検索"><svg><use href="#i-search-layer"/></svg></button>
                <button class="tab" aria-label="実験"><svg><use href="#i-flask"/></svg></button>
            </div>
            <div class="railed layer-prop">
                <div class="well"><div class="vscroll"></div></div>
                <span class="rails"></span>
            </div>
        </section>

        <section class="panel layer-panel">
            <div class="tabs">
                <button class="tab-menu" aria-label="メニュー"><svg><use href="#i-menu"/></svg></button>
                <div class="tab active"><svg class="big"><use href="#i-layers"/></svg><h2>レイヤー</h2></div>
                <button class="tab" aria-label="オートアクション"><svg class="knot"><use href="#i-knot"/></svg></button>
                <button class="tab" aria-label="アニメーション"><svg><use href="#i-clap"/></svg></button>
            </div>
            <div class="railed grow">
                <div class="layer-body">
                    <div class="layer-row">
                        <span class="select flat w-mode"><select aria-label="合成モード" disabled><option></option></select></span>
                        <input type="range" class="layer-opacity" aria-label="不透明度" disabled>
                    </div>
                    <div class="layer-row icons">
                        <span class="select flat w-color"><select aria-label="パレットカラー" disabled><option></option></select></span>
                        <span class="end"></span>
                        <button aria-label="クリップ"><svg><use href="#i-eye"/></svg></button>
                        <button aria-label="参照"><svg><use href="#i-light"/></svg></button>
                        <button aria-label="下描き"><svg><use href="#i-draft"/></svg></button>
                        <button aria-label="ロック"><svg><use href="#i-lock"/></svg></button>
                        <button aria-label="透明ピクセルをロック"><svg><use href="#i-lock-px"/></svg></button>
                        <span class="select flat w-small"><select aria-label="マスク" disabled><option></option></select></span>
                        <span class="select flat w-small"><select aria-label="定規" disabled><option></option></select></span>
                    </div>
                    <div class="layer-row icons tools">
                        <svg class="big"><use href="#i-layers"/></svg>
                        <span class="end"></span>
                        <button aria-label="新規ラスター"><svg><use href="#i-page"/></svg></button>
                        <button aria-label="新規ベクター"><svg><use href="#i-page-sub"/></svg></button>
                        <button aria-label="新規フォルダー"><svg><use href="#i-folder"/></svg></button>
                        <button aria-label="転写"><svg><use href="#i-merge"/></svg></button>
                        <button aria-label="結合"><svg><use href="#i-merge"/></svg></button>
                        <button aria-label="マスク作成"><svg><use href="#i-mask"/></svg></button>
                        <button aria-label="マスク適用"><svg><use href="#i-apply"/></svg></button>
                        <button aria-label="削除" class="faded"><svg><use href="#i-trash"/></svg></button>
                    </div>
                    <div class="well layers"><div class="vscroll"></div></div>
                </div>
                <span class="rails"></span>
            </div>
        </section>
    </aside>
</div>

<script>
    // label and dot diameter of each brush size
    const sizes = [
        ['0.7', 1], ['1', 1], ['1.5', 1], ['2', 1], ['2.5', 2],
        ['3', 2], ['4', 3], ['5', 4], ['6', 5], ['7', 6],
        ['8', 7], ['10', 9], ['12', 11], ['15', 14], ['17', 16],
        ['20', 19], ['25', 24], ['30', 24], ['40', 24], ['50', 24],
        ['60', 24], ['70', 24], ['80', 24], ['100', 24], ['120', 24]
    ];

    const grid = document.getElementById('sizeGrid');
    sizes.slice(0, 20).forEach(([label, dot]) => {
        const selected = label === '50' ? ' selected' : '';
        grid.innerHTML += `<button class="size${selected}"><i style="--dot: ${dot}px"></i><span>${label}</span></button>`;
    });
    sizes.slice(20).forEach(([label, dot]) => {
        grid.innerHTML += `<button class="size" aria-label="${label}"><i style="--dot: ${dot}px"></i></button>`;
    });
</script>

</body>
</html>
```
FILE: styles.css
```css
* {
    box-sizing: border-box;
}
:root {
    --panel: #6d6e70;
    --line: #2a2b2d;
    --light: #88898b;
    --text: #f0f0f0;
    --pick: #718795;
    --strip: linear-gradient(#4c4c4c, #333);
}
body {
    margin: 0;
    height: 100vh;
    display: flex;
    flex-direction: column;
    overflow: hidden;
    background: var(--panel);
    border-bottom: 2px solid #151515;
    color: var(--text);
    font-family: "Noto Sans", "Noto Sans CJK JP", sans-serif;
    font-size: 11px;
    line-height: 16px;
    font-feature-settings: "palt";
}
button, input, select {
    font: inherit;
    font-feature-settings: inherit;
    color: inherit;
    margin: 0;
    padding: 0;
    border: 0;
    background: none;
    border-radius: 0;
}
button {
    display: flex;
    align-items: center;
    justify-content: center;
    flex: none;
}
svg {
    display: block;
    flex: none;
}
h1, h2 {
    margin: 0;
    font-weight: normal;
}
input[type=range] {
    appearance: none;
    display: block;
}
input[type=text] {
    min-width: 0;
}
.defs {
    position: absolute;
}
.end {
    margin-left: auto;
}

/* title and menu */
.titlebar {
    flex: none;
    height: 25px;
    display: grid;
    grid-template-columns: 1fr auto 1fr;
    align-items: center;
    background: linear-gradient(#525252, #383838);
    border-top: 1px solid #2a2a2a;
    border-bottom: 1px solid #8a8a8a;
}
.titlebar h1 {
    grid-column: 2;
    font-size: 11px;
    color: #c4c4c4;
}
.window-controls {
    display: flex;
    justify-content: flex-end;
    gap: 2px;
    padding-right: 1px;
}
.window-controls button {
    width: 16px;
    height: 16px;
    border-radius: 50%;
    background: linear-gradient(#444, #161616 50%);
}
.window-controls svg {
    width: 16px;
    height: 16px;
    fill: none;
    stroke: #d4d4d4;
    stroke-width: 2;
}
.menubar {
    flex: none;
    height: 23px;
    display: flex;
    align-items: center;
    gap: 20px;
    padding: 0 0 1px 14px;
}
.menubar a {
    color: var(--text);
    text-decoration: none;
}

.workspace {
    flex: 1;
    min-height: 0;
    display: flex;
}
.dock-head {
    flex: none;
    height: 20px;
    display: flex;
    align-items: center;
    padding: 0 2px;
    background: linear-gradient(#383838, #505050);
    border-top: 1px solid #222;
}
.dock-head .dbl {
    width: 12px;
    height: 14px;
}
.dock-head .single {
    width: 6px;
    height: 14px;
    margin-left: 14px;
}
.dock-head .single.end {
    margin-left: auto;
}
.dock-head .last {
    margin-left: 18px;
}
.grip {
    width: 9px;
    height: 9px;
    background: repeating-linear-gradient(90deg, #777 0 1px, #222 1px 2px, transparent 2px 3px);
}

/* panels and tabs */
.panel {
    flex: none;
    border-top: 1px solid #949494;
}
.tabs {
    flex: none;
    height: 18px;
    display: flex;
    margin-bottom: 4px;
    background: var(--strip);
    border-top: 1px solid var(--line);
    border-bottom: 1px solid var(--line);
}
.tab-menu {
    width: 19px;
    border-right: 1px solid var(--line);
}
.tab-menu svg {
    width: 10px;
    height: 10px;
}
.tab {
    height: 16px;
    width: 28px;
    align-self: flex-end;
    align-items: flex-start;
    overflow: hidden;
    background: #5c5d5f;
    border-right: 1px solid var(--line);
    border-top: 1px solid #777;
}
.tab svg {
    width: 16px;
    height: 12px;
    margin-top: 3px;
}
.tab.active {
    height: 20px;
    width: auto;
    flex: none;
    display: flex;
    align-items: center;
    gap: 2px;
    padding: 0 1px 0 4px;
    margin-bottom: -4px;
    overflow: visible;
    background: var(--panel);
    border-right: 0;
    z-index: 1;
}
.tab h2 {
    font-size: 9px;
    line-height: 16px;
    color: #d0d0d0;
}
.tab.active svg {
    margin: 0;
}
.tab .nib {
    width: 8px;
    height: 18px;
}
.tab .tree {
    width: 10px;
    height: 16px;
}
.tab .gear {
    width: 10px;
    height: 10px;
}
.tab .big, .big {
    width: 18px;
    height: 16px;
}
.tab.active .rgb {
    width: 18px;
    height: 16px;
    margin-right: 3px;
}
.tab .knot {
    width: 18px;
    height: 13px;
    margin-top: 1px;
}
.panel-foot {
    height: 22px;
    display: flex;
    align-items: center;
    justify-content: flex-end;
    gap: 4px;
    padding-right: 2px;
}
.panel-foot svg {
    width: 16px;
    height: 16px;
}
.caret {
    width: 9px;
    height: 5px;
    background: var(--line);
    clip-path: polygon(0 0, 100% 0, 50% 100%);
}
.select {
    position: relative;
    height: 20px;
    background: linear-gradient(#7c7d7f, #5c5d5f);
    border: 1px solid #444;
    border-radius: 2px;
}
.select select {
    appearance: none;
    width: 100%;
    height: 100%;
    padding-right: 12px;
    text-align: center;
}
.select::after {
    content: "";
    position: absolute;
    right: 2px;
    top: 7px;
    width: 9px;
    height: 5px;
    background: var(--line);
    clip-path: polygon(0 0, 100% 0, 50% 100%);
    pointer-events: none;
}
.select.flat {
    background: #7b7c7e;
    border-color: #8a8b8d;
}
.select.flat::after {
    background: #4c4d4f;
}

/* scrollbars */
.scroller {
    display: flex;
    border-top: 1px solid var(--line);
}
.scrollbar {
    flex: none;
    width: 12px;
    display: flex;
    flex-direction: column;
    gap: 1px;
    background: #5c5d5f;
    border-left: 1px solid #505153;
}
.scrollbar .down {
    margin-top: auto;
}
.arrow {
    height: 11px;
    background: #77787a;
    border: 1px solid #3a3b3d;
}
.arrow::before {
    content: "";
    width: 5px;
    height: 3px;
    background: #222;
    clip-path: polygon(0 0, 100% 0, 50% 100%);
}
.arrow.up::before {
    clip-path: polygon(50% 0, 100% 100%, 0 100%);
}
.thumb {
    height: 98px;
    background: repeating-linear-gradient(#333 0 1px, transparent 1px 3px) 2px center / 6px 7px no-repeat, #6d6e70;
    border: 1px solid #434446;
    border-top-color: var(--light);
}
.sizes .thumb {
    height: 89px;
}
.vscroll {
    flex: none;
    width: 12px;
    background: #5e5f61;
    border-left: 2px solid #4c4d4f;
    border-right: 2px solid #77787a;
}
.rails {
    flex: none;
    width: 7px;
    background: repeating-linear-gradient(90deg, var(--line) 0 1px, #606163 1px 3px);
}

/* tools */
.toolbox {
    flex: none;
    width: 43px;
    display: flex;
    flex-direction: column;
    border-left: 1px solid #7b7c7e;
    border-right: 2px solid #4c4d4f;
}
.toolbox .tabs {
    margin-top: 1px;
}
.toolbox .tab {
    flex: 1;
    justify-content: center;
}
.tool-group {
    display: flex;
    flex-direction: column;
    align-items: center;
    padding: 1px 2px 0 0;
    border-top: 1px solid var(--line);
    border-left: 1px solid var(--line);
    border-bottom: 1px solid var(--light);
}
.tool {
    width: 24px;
    height: 26px;
}
.tool svg {
    width: 20px;
    height: 22px;
}
.tool.selected {
    background: var(--pick);
    border: 1px solid #8fa9b8;
}
.glyph-a {
    font: bold 23px/26px "Liberation Serif", serif;
    color: #222;
}
.swatch {
    border: 1px solid var(--line);
}
.swatch.main {
    background: #000;
    border: 2px solid #80bfe6;
    box-shadow: inset 0 0 0 1px #000, inset 0 0 0 2px #fff;
}
.swatch.sub {
    background: #00a2ff;
}
.swatch.checker {
    background: repeating-conic-gradient(#fff 0 25%, #777 0 50%) 0 0 / 10px 10px;
}
.tool-colors {
    display: grid;
    height: 38px;
    margin: 1px;
}
.tool-colors .swatch {
    grid-area: 1 / 1;
    width: 24px;
    height: 24px;
}
.tool-colors .sub {
    justify-self: end;
    align-self: end;
}
.tool-clear {
    height: 11px;
    margin: 0 1px;
}

/* sub tool */
.palettes {
    flex: none;
    width: 177px;
    display: flex;
    flex-direction: column;
    border-right: 2px solid #4a4a4a;
}
.groups {
    display: grid;
    grid-template-columns: 1fr 1fr;
    gap: 1px;
    height: 28px;
    padding: 1px 1px 2px;
    border-top: 1px solid var(--line);
}
.group {
    justify-content: flex-start;
    gap: 4px;
    padding-left: 3px;
    border: 1px solid var(--line);
    border-radius: 2px;
}
.group svg {
    width: 18px;
    height: 20px;
}
.group.selected {
    background: linear-gradient(#7c92a0, #667c89);
}
.subtools {
    height: 232px;
}
.subtool-list {
    flex: 1;
    min-width: 0;
    overflow: hidden;
    border-left: 1px solid var(--line);
}
.subtool {
    display: grid;
    width: 100%;
    height: 24px;
    overflow: hidden;
    border-bottom: 1px solid var(--line);
}
.subtool svg {
    grid-area: 1 / 1;
    width: 162px;
    height: 23px;
}
.subtool span {
    grid-area: 1 / 1;
    justify-self: end;
    z-index: 1;
    padding: 7px 3px 0 0;
}
.subtool.selected {
    background: #708794;
    box-shadow: inset 0 0 0 1px #8fa9b8;
}
.subtool.last {
    height: 15px;
    align-items: start;
    background: linear-gradient(#4c4d4f, #6d6e70);
    border-bottom: 0;
}
.scatter {
    fill: none;
    stroke: #2a2a2a;
    stroke-width: 2;
}

/* tool property */
.preview {
    display: grid;
    height: 41px;
    background: linear-gradient(90deg, #b4b4b4 50%, #6d6e70 50%);
    border: 1px solid var(--line);
    border-bottom-width: 2px;
    border-right: 0;
}
.preview > * {
    grid-area: 1 / 1;
}
.preview-stroke {
    width: 174px;
    height: 38px;
}
.preview span {
    justify-self: start;
    align-self: start;
    z-index: 1;
    height: 14px;
    padding-right: 2px;
    line-height: 14px;
    background: rgba(90, 90, 90, .6);
}
.preview button {
    justify-self: end;
    align-self: end;
    padding: 0 2px 1px 0;
}
.preview button svg {
    width: 16px;
    height: 16px;
}
.props-wrap {
    height: 184px;
    border-top: 0;
    border-left: 1px solid var(--line);
}
.props {
    flex: 1;
    min-width: 0;
    padding: 0 4px 0 10px;
}
.scrollbar.empty {
    width: 12px;
    border-right: 2px solid #6d6e70;
    border-left-color: #4c4d4f;
}
.prop {
    height: 30px;
    display: flex;
    align-items: center;
    border-bottom: 1px solid #58595b;
    box-shadow: 0 1px #7b7c7e;
}
.prop:last-child {
    border-bottom: 0;
    box-shadow: none;
}
.prop-main {
    width: 76px;
    flex: none;
    padding: 0 0 2px 6px;
}
.prop-main label {
    display: block;
    line-height: 15px;
    white-space: nowrap;
}
.level {
    width: 49px;
    height: 9px;
    margin-left: 21px;
    border-bottom: 1px solid var(--line);
    border-right: 1px solid var(--line);
    background: linear-gradient(90deg, #888, #bbb) 0 0 / var(--fill) 100% no-repeat;
    box-shadow: inset 1px 0 var(--line);
}
.level::-webkit-slider-thumb {
    appearance: none;
    width: 1px;
    height: 8px;
    background: var(--line);
}
.num {
    flex: 1;
    width: 20px;
    text-align: right;
    padding-right: 2px;
}
.spin {
    flex: none;
    width: 11px;
    display: grid;
    gap: 3px;
    justify-items: center;
}
.spin button {
    width: 10px;
    height: 5px;
    background: #222;
    clip-path: polygon(50% 0, 100% 100%, 0 100%);
}
.spin button + button {
    clip-path: polygon(0 0, 100% 0, 50% 100%);
}
.dyn, .dyn-gap {
    flex: none;
    width: 15px;
    height: 24px;
    margin-left: 2px;
}
.dyn {
    background: linear-gradient(#77787a, #626365);
    border: 1px solid #444;
    border-radius: 2px;
}
.dyn i {
    width: 8px;
    height: 8px;
    border: 1px solid #fff;
    border-radius: 1px;
}
.dyn svg {
    width: 13px;
    height: 16px;
}
.blend {
    height: 26px;
    padding-left: 6px;
    gap: 4px;
    white-space: nowrap;
}
.blend .select {
    flex: 1;
}
.anti {
    padding-left: 6px;
    gap: 2px;
}
.anti .dim {
    flex: 1;
    width: 20px;
    overflow: hidden;
    white-space: nowrap;
    font-size: 9px;
    color: #b4b4b4;
}
.aa {
    width: 113px;
    height: 23px;
    display: flex;
    align-items: center;
    border: 1px solid #4a4a4a;
    border-radius: 2px;
    background: linear-gradient(#77787a, #5c5d5f);
}
.aa button {
    width: 24px;
    height: 21px;
}
.aa .selected {
    width: 26px;
    background: #6f8694;
    border: 1px solid #8fa9b8;
}
.aa i {
    width: 18px;
    height: 18px;
    border-radius: 50%;
    border: 4px solid #aaa;
    background: #222;
}
.aa .d0 {
    width: 14px;
    height: 14px;
    border: 0;
}
.aa .d2 {
    background: radial-gradient(#222 35%, #666 55%);
    border-width: 3px;
}
.aa .d3 {
    background: radial-gradient(#222 20%, #555 35%, #777 60%);
    border-width: 3px;
}
.aa .caret {
    margin-left: 3px;
}

/* brush size */
.sizes {
    height: 186px;
    border-bottom: 1px solid var(--line);
}
.size-grid {
    flex: 1;
    min-width: 0;
    display: grid;
    grid-template-columns: repeat(5, 1fr);
    grid-auto-rows: 40px;
    overflow: hidden;
    border-left: 1px solid var(--line);
}
.size {
    display: grid;
    grid-template-rows: 38px;
    justify-items: center;
    border-right: 1px solid var(--line);
    border-bottom: 1px solid var(--line);
}
.size i {
    grid-area: 1 / 1;
    align-self: start;
    width: var(--dot);
    height: var(--dot);
    margin-top: calc(15px - var(--dot) / 2);
    border-radius: 50%;
    background: #000;
}
.size span {
    grid-area: 1 / 1;
    align-self: end;
    line-height: 14px;
}
.size.selected {
    background: linear-gradient(#7a909e, #687d89);
    box-shadow: inset 0 0 0 1px #8fa9b8;
}

/* color slider */
.color-panel {
    flex: 1;
    min-height: 0;
    display: flex;
    flex-direction: column;
}
.tab-more {
    width: 12px;
    height: 14px;
    margin: 1px 0 0 auto;
}
.color-body {
    flex: 1;
    display: flex;
    border-left: 1px solid var(--line);
}
.color-inner {
    flex: 1;
    min-width: 0;
    padding: 2px 0 0 1px;
}
.color-box {
    display: flex;
    height: 84px;
    padding: 0 2px;
}
.modes {
    width: 16px;
    padding-top: 2px;
}
.modes button {
    width: 16px;
    height: 23px;
    writing-mode: vertical-rl;
    transform: rotate(180deg);
    font-size: 10px;
    line-height: 14px;
    color: #a0a1a3;
    border: 1px solid var(--line);
    border-left: 0;
    border-radius: 0 3px 3px 0;
}
.modes .on {
    height: 34px;
    color: #ddd;
    border-width: 0 1px 0 0;
}
.channels {
    flex: 1;
    padding-top: 3px;
    border: 1px solid var(--line);
    border-left: 0;
}
.channel {
    display: flex;
    align-items: center;
    height: 25px;
}
.channel label {
    width: 18px;
    padding-left: 2px;
}
.channel input[type=range] {
    width: 77px;
    height: 9px;
    border: 1px solid #4a4b4d;
}
.channel input::-webkit-slider-thumb {
    appearance: none;
    width: 10px;
    height: 5px;
    margin: 12px 0 0 -5px;
    background: #505153;
    clip-path: polygon(50% 0, 100% 100%, 0 100%);
}
.channel .num {
    text-align: left;
    padding-left: 18px;
}
.channel .spin {
    margin-right: 2px;
}
.hue {
    background: linear-gradient(90deg, #f00, #ff0, #0f0, #0ff, #00f, #f0f, #f00);
}
.sat {
    background: #000;
}
.val {
    background: linear-gradient(90deg, #000, #fff);
}
.swatches {
    display: grid;
    grid-template-columns: 1fr 1fr 1fr;
    gap: 3px;
    height: 24px;
    margin-top: 2px;
}

/* canvas */
.stage {
    flex: 1;
    min-width: 0;
    display: flex;
    flex-direction: column;
    background: #333;
}
.commandbar {
    flex: none;
    height: 26px;
    display: flex;
    align-items: center;
    background: var(--panel);
    border-top: 1px solid #222;
    border-left: 1px solid #333;
    border-bottom: 1px solid #555;
}
.commandbar button {
    width: 24px;
    height: 22px;
}
.commandbar svg {
    width: 20px;
    height: 20px;
}
.commandbar .logo {
    width: 41px;
    height: 20px;
    border: 1px solid #fff;
    border-radius: 2px;
    background: linear-gradient(#fff, #ccc);
}
.commandbar .logo svg {
    width: 24px;
    height: 18px;
}
.commandbar .wide {
    width: 38px;
    gap: 4px;
}
.sep {
    flex: none;
    width: 1px;
    height: 22px;
    margin: 0 3px 0 4px;
    background: #848587;
}
.doc-tabs {
    flex: none;
    height: 23px;
    display: flex;
    background: #3f3f3f;
    border-bottom: 2px solid #6a6b6d;
    border-left: 1px solid #333;
    padding-top: 1px;
}
.doc-tab {
    width: 98px;
    display: flex;
    align-items: center;
    justify-content: space-between;
    padding: 0 4px 0 3px;
    background: linear-gradient(#808183, #6d6e70);
    border-right: 1px solid #8a8a8a;
    font-size: 9px;
    color: #d8d8d8;
}
.doc-tab svg {
    width: 8px;
    height: 8px;
    stroke: #222;
    stroke-width: 2;
}
.doc-more {
    width: 10px;
    height: 19px;
    margin-left: auto;
    border-color: var(--light);
}
.canvas-row {
    flex: 1;
    min-height: 0;
    display: flex;
    border-top: 1px solid #222;
}
.canvas {
    flex: 1;
}
.zoom-row {
    flex: none;
    height: 13px;
    display: flex;
    align-items: center;
    background: var(--panel);
    border-bottom: 1px solid #8a8a8a;
    border-left: 1px solid #333;
}
.zoom-row button {
    width: 20px;
    height: 12px;
}
.zoom-row svg {
    width: 12px;
    height: 12px;
}
.zoom-row .fit {
    margin-left: 4px;
}
.zoom-range {
    width: 94px;
    height: 12px;
    margin-right: 1px;
    background: linear-gradient(to bottom right, #6d6e70 50%, #28292b 50%);
    border: 1px solid var(--line);
}
.zoom-range::-webkit-slider-thumb {
    appearance: none;
    width: 4px;
    height: 12px;
    background: #5c5d5f;
}
.hscroll {
    flex: 1;
    height: 12px;
    background: #5e5f61;
    border-top: 2px solid #4c4d4f;
    border-bottom: 2px solid #808183;
}
.corner {
    width: 12px;
    height: 12px;
    background: #6d6e70;
}
.timeline-bar {
    flex: none;
    height: 15px;
    background: #4f4f4f;
    border-left: 1px solid #333;
    border-top: 1px solid #333;
}
.timeline-bar button {
    width: 20px;
    height: 14px;
    background: #5c5d5f;
}
.timeline-bar svg {
    width: 14px;
    height: 12px;
}
.gutter {
    flex: none;
    width: 14px;
    background: #505050;
}
.gutter .dock-head {
    padding: 0 1px;
}

/* right side */
.right {
    flex: none;
    width: 231px;
    display: flex;
    flex-direction: column;
    border-left: 2px solid #848587;
}
.railed {
    display: flex;
}
.grow {
    flex: 1;
    min-height: 0;
}
.nav-body {
    flex: 1;
    min-width: 0;
    height: 129px;
}
.nav-view {
    height: 86px;
    margin-bottom: 2px;
    border: 1px solid var(--line);
    border-bottom-color: #58595b;
    border-right-color: #58595b;
}
.nav-row {
    height: 20px;
    display: flex;
    align-items: center;
    padding-left: 4px;
}
.nav-row button {
    width: 20px;
    height: 20px;
}
.nav-row svg {
    width: 16px;
    height: 16px;
}
.nav-row .sep {
    height: 16px;
    margin: 0 1px 0 2px;
}
.faded {
    opacity: .5;
}
.wedge, .wave {
    width: 108px;
    height: 12px;
    border: 1px solid var(--line);
    margin-right: 6px;
}
.wedge {
    background: linear-gradient(to bottom right, #6d6e70 50%, #28292b 50%);
}
.wave {
    display: grid;
}
.wave > input, .nav-row .wave svg {
    grid-area: 1 / 1;
    width: 106px;
    height: 10px;
    fill: #28292b;
}
.wedge::-webkit-slider-thumb,
.wave input::-webkit-slider-thumb,
.layer-opacity::-webkit-slider-thumb {
    appearance: none;
    width: 0;
}
.layer-prop {
    height: 165px;
}
.well {
    flex: 1;
    display: flex;
    justify-content: flex-end;
    border: 1px solid var(--line);
    border-bottom-color: #58595b;
    border-right: 0;
}
.layer-panel {
    flex: 1;
    min-height: 0;
    display: flex;
    flex-direction: column;
}
.layer-body {
    flex: 1;
    min-width: 0;
    display: flex;
    flex-direction: column;
}
.layer-row {
    flex: none;
    height: 21px;
    display: flex;
    align-items: center;
    padding-left: 1px;
}
.layer-row.tools {
    height: 24px;
    border-top: 1px solid #88898b;
    margin-top: 1px;
    padding-bottom: 2px;
}
.w-mode {
    width: 111px;
}
.w-color {
    width: 35px;
}
.w-small {
    width: 31px;
    margin-left: 1px;
}
.layer-opacity {
    width: 68px;
    height: 9px;
    margin-left: 6px;
    border: 1px solid var(--line);
}
.icons button {
    width: 20px;
    height: 20px;
}
.icons button svg {
    width: 16px;
    height: 16px;
}
.layers {
    box-shadow: inset 3px 0 #606163, inset 4px 0 var(--line);
}
```
